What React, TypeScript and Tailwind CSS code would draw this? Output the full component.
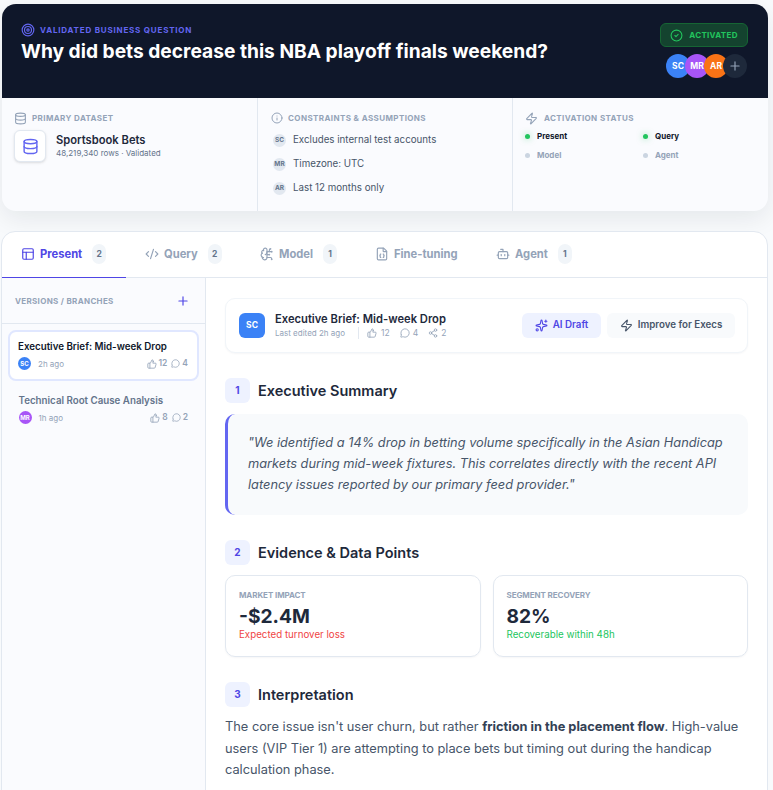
import React from 'react';
import {
  Target, CircleCheck, Plus, Database, Info, Zap, PanelsTopLeft, CodeXml, BrainCircuit, FileJson, Bot,
  ThumbsUp, MessageCircle, Share2, Sparkles,
} from 'lucide-react';

const font = { fontFamily: 'Inter, sans-serif' };

const tabs = [
  { label: 'Present', count: 2, Icon: PanelsTopLeft, active: true, w: 'w-[124px]' },
  { label: 'Query', count: 2, Icon: CodeXml, w: 'w-[115px]' },
  { label: 'Model', count: 1, Icon: BrainCircuit, w: 'w-[115px]' },
  { label: 'Fine-tuning', Icon: FileJson, w: 'w-[121px]' },
  { label: 'Agent', count: 1, Icon: Bot, w: 'w-[110px]' },
];

const Constraint = ({ who, text }: { who: string; text: string }) => (
  <div className="flex items-center gap-[7px] h-[16px]">
    <span className="w-[13px] h-[13px] rounded-full bg-[#e2e8f0] text-[#64748b] text-[6.5px] font-bold flex items-center justify-center">{who}</span>
    <span className="text-[9.75px] text-[#475569]">{text}</span>
  </div>
);

const Status = ({ label, on }: { label: string; on?: boolean }) => (
  <div className="flex items-center gap-[7px] h-[12px]">
    <span className={on ? 'w-[5px] h-[5px] rounded-full bg-[#22c55e] shadow-[0_0_6px_rgba(34,197,94,0.5)]' : 'w-[5px] h-[5px] rounded-full bg-[#cbd5e1]'} />
    <span className={on ? 'text-[8px] font-bold text-[#0f172a]' : 'text-[8px] font-bold text-[#94a3b8]'}>{label}</span>
  </div>
);

const SectionHead = ({ n, title }: { n: number; title: string }) => (
  <div className="flex items-center gap-[8px]">
    <span className="w-[25px] h-[25px] rounded-[6px] bg-[#eef2ff] text-[#4f46e5] text-[10px] font-bold flex items-center justify-center">{n}</span>
    <h2 className="text-[14.5px] font-semibold text-[#1e293b]">{title}</h2>
  </div>
);

const App: React.FC = () => {
  return (
    <div style={font} className="h-[790px] overflow-hidden bg-[#f8fafc] pl-[2px] pt-[4px] pr-[5px]">
      {/* Question card */}
      <div className="rounded-[14px] overflow-hidden bg-[#fafbfe] shadow-[0_8px_24px_rgba(15,23,42,0.08)]">
        <div className="h-[94px] bg-[#0f172a] pl-[19px] pr-[20px] flex justify-between">
          <div className="pt-[18px]">
            <div className="flex items-center gap-[5px] h-[16px]">
              <Target size={14} className="text-[#6366f1]" />
              <span className="text-[8px] font-bold tracking-[0.1em] text-[#6366f1]">VALIDATED BUSINESS QUESTION</span>
            </div>
            <h1 className="text-[19.2px] leading-[26px] font-bold text-white">Why did bets decrease this NBA playoff finals weekend?</h1>
          </div>
          <div className="pt-[19px] flex flex-col items-end">
            <div className="h-[24px] w-[88px] rounded-[6px] border border-[#166534] bg-[#14432f] flex items-center justify-center gap-[6px]">
              <CircleCheck size={13} className="text-[#22c55e]" />
              <span className="text-[8px] font-bold tracking-[0.04em] text-[#22c55e]">ACTIVATED</span>
            </div>
            <div className="flex mt-[7px] mr-[1px]">
              <span className="w-[24px] h-[24px] rounded-full bg-[#3b82f6] text-white text-[8.5px] font-bold flex items-center justify-center">SC</span>
              <span className="w-[24px] h-[24px] -ml-[5px] rounded-full bg-[#a855f7] text-white text-[8.5px] font-bold flex items-center justify-center">MR</span>
              <span className="w-[24px] h-[24px] -ml-[5px] rounded-full bg-[#f97316] text-white text-[8.5px] font-bold flex items-center justify-center">AR</span>
              <span className="w-[24px] h-[24px] -ml-[5px] rounded-full bg-[#1e293b] text-[#94a3b8] flex items-center justify-center"><Plus size={14} /></span>
            </div>
          </div>
        </div>
        <div className="h-[113px] grid grid-cols-[256px_255px_1fr]">
          <div className="border-r border-[#e2e8f0] pl-[12px] pt-[14px]">
            <div className="flex items-center gap-[5px] h-[12px]">
              <Database size={13} className="text-[#94a3b8]" />
              <span className="text-[8px] font-bold tracking-[0.05em] text-[#94a3b8]">PRIMARY DATASET</span>
            </div>
            <div className="flex items-center gap-[10px] mt-[6px]">
              <div className="w-[32px] h-[32px] rounded-[6px] bg-white border border-[#e2e8f0] shadow-sm flex items-center justify-center">
                <Database size={17} className="text-[#6366f1]" />
              </div>
              <div>
                <div className="text-[11.2px] leading-[14px] font-semibold text-[#1e293b]">Sportsbook Bets</div>
                <div className="text-[8px] leading-[13px] text-[#64748b]">48,219,340 rows · Validated</div>
              </div>
            </div>
          </div>
          <div className="border-r border-[#e2e8f0] pl-[13px] pt-[14px]">
            <div className="flex items-center gap-[5px] h-[12px]">
              <Info size={12} className="text-[#94a3b8]" />
              <span className="text-[8px] font-bold tracking-[0.05em] text-[#94a3b8]">CONSTRAINTS &amp; ASSUMPTIONS</span>
            </div>
            <div className="flex flex-col gap-[8px] mt-[8.5px] pl-[2px]">
              <Constraint who="SC" text="Excludes internal test accounts" />
              <Constraint who="MR" text="Timezone: UTC" />
              <Constraint who="AR" text="Last 12 months only" />
            </div>
          </div>
          <div className="pl-[12px] pt-[14px]">
            <div className="flex items-center gap-[6px] h-[12px]">
              <Zap size={13} className="text-[#94a3b8]" />
              <span className="text-[8px] font-bold tracking-[0.05em] text-[#94a3b8]">ACTIVATION STATUS</span>
            </div>
            <div className="grid grid-cols-[118px_1fr] gap-y-[7px] mt-[6px]">
              <Status label="Present" on />
              <Status label="Query" on />
              <Status label="Model" />
              <Status label="Agent" />
            </div>
          </div>
        </div>
      </div>

      {/* Detail card */}
      <div className="relative mt-[20px] -ml-px h-[600px] rounded-t-[14px] border border-[#e2e8f0] bg-white flex flex-col">
        <div className="h-[46px] pb-px flex border-b border-[#e2e8f0] shrink-0">
          {tabs.map(({ label, count, Icon, active, w }) => (
            <div key={label} className={`${w} relative flex items-center pl-[19px] gap-[5px]`}>
              <Icon size={14} className={active ? 'text-[#4f46e5]' : 'text-[#94a3b8]'} />
              <span className={active ? 'text-[11.2px] font-bold text-[#4f46e5]' : 'text-[11.2px] font-bold text-[#94a3b8]'}>{label}</span>
              {count !== undefined && (
                <span className="ml-[5px] h-[20px] w-[14px] rounded-full bg-[#f1f5f9] text-[#64748b] text-[8.5px] font-bold flex items-center justify-center">{count}</span>
              )}
              {active && <span className="absolute left-0 right-0 -bottom-[2px] h-px bg-[#4f46e5]" />}
            </div>
          ))}
        </div>
        <div className="flex flex-1 min-h-0">
          {/* Sidebar */}
          <div className="w-[204px] shrink-0 border-r border-[#e2e8f0] bg-[#fafbfe]">
            <div className="h-[46px] border-b border-[#e2e8f0] flex items-center justify-between pl-[13px] pr-[15px]">
              <span className="text-[8px] font-bold tracking-[0.04em] text-[#94a3b8]">VERSIONS / BRANCHES</span>
              <Plus size={14} className="text-[#4f46e5]" />
            </div>
            <div className="px-[6px] pt-[6px]">
              <div className="h-[51px] rounded-[8px] border-2 border-[#e0e7ff] bg-white pl-[8px] pr-[9px] pt-[8px]">
                <div className="text-[9.75px] leading-[14px] font-semibold text-[#0f172a]">Executive Brief: Mid-week Drop</div>
                <div className="flex items-center mt-[3px] text-[8px] text-[#94a3b8]">
                  <span className="w-[13px] h-[13px] rounded-full bg-[#3b82f6] text-white text-[6px] font-bold flex items-center justify-center">SC</span>
                  <span className="ml-[7px]">2h ago</span>
                  <ThumbsUp size={10} className="ml-auto" />
                  <span className="ml-[1px] font-semibold text-[8.5px]">12</span>
                  <MessageCircle size={9} className="ml-[4px]" />
                  <span className="ml-[2px] font-semibold text-[8.5px]">4</span>
                </div>
              </div>
              <div className="h-[51px] mt-[5px] pl-[10.5px] pr-[11px] pt-[8px]">
                <div className="text-[9.75px] leading-[14px] font-semibold text-[#64748b]">Technical Root Cause Analysis</div>
                <div className="flex items-center mt-[3px] text-[8px] text-[#94a3b8]">
                  <span className="w-[13px] h-[13px] rounded-full bg-[#a855f7] text-white text-[6px] font-bold flex items-center justify-center">MR</span>
                  <span className="ml-[7px]">1h ago</span>
                  <ThumbsUp size={10} className="ml-auto" />
                  <span className="ml-[2px] font-semibold text-[8.5px]">8</span>
                  <MessageCircle size={9} className="ml-[4px]" />
                  <span className="ml-[2px] font-semibold text-[8.5px]">2</span>
                </div>
              </div>
            </div>
          </div>

          {/* Main */}
          <div className="flex-1 min-w-0 pl-[19px] pr-[19px] pt-[20px]">
            <div className="h-[55px] rounded-[10px] border border-[#f1f5f9] shadow-[0_1px_2px_rgba(15,23,42,0.04)] bg-white flex items-center pl-[13px] pr-[12px]">
              <span className="w-[26px] h-[25px] rounded-[6px] bg-[#3b82f6] text-white text-[8.5px] font-bold flex items-center justify-center">SC</span>
              <div className="ml-[10px]">
                <div className="text-[11.2px] leading-[15px] font-semibold text-[#1e293b]">Executive Brief: Mid-week Drop</div>
                <div className="flex items-center text-[8px] leading-[12px] text-[#94a3b8]">
                  <span>Last edited 2h ago</span>
                  <span className="w-px h-[12px] bg-[#e2e8f0] ml-[13px] mr-[8px]" />
                  <ThumbsUp size={10} />
                  <span className="ml-[4px] text-[8.5px]">12</span>
                  <MessageCircle size={10} className="ml-[10px]" />
                  <span className="ml-[3px] text-[8.5px]">4</span>
                  <Share2 size={10} className="ml-[10px]" />
                  <span className="ml-[3px] text-[8.5px]">2</span>
                </div>
              </div>
              <div className="ml-auto flex gap-[6px]">
                <div className="h-[25px] w-[79px] rounded-[6px] bg-[#eef2ff] flex items-center justify-center gap-[5px] text-[#4f46e5]">
                  <Sparkles size={13} />
                  <span className="text-[9.75px] font-semibold">AI Draft</span>
                </div>
                <div className="h-[25px] w-[128px] rounded-[6px] bg-[#f8fafc] flex items-center justify-center gap-[5px] text-[#475569]">
                  <Zap size={13} />
                  <span className="text-[9.75px] font-semibold">Improve for Execs</span>
                </div>
              </div>
            </div>

            <div className="mt-[25px]">
              <SectionHead n={1} title="Executive Summary" />
              <div className="mt-[11px] h-[101px] rounded-[10px] border-l-[3px] border-[#6366f1] bg-[#f8fafc] pl-[20px] pr-[20px] pt-[18px]">
                <p className="text-[12.8px] leading-[21px] italic text-[#475569]">"We identified a 14% drop in betting volume specifically in the Asian Handicap markets during mid-week fixtures. This correlates directly with the recent API latency issues reported by our primary feed provider."</p>
              </div>
            </div>

            <div className="mt-[25px]">
              <SectionHead n={2} title="Evidence & Data Points" />
              <div className="grid grid-cols-2 gap-[12px] mt-[10px]">
                <div className="h-[82px] rounded-[10px] border border-[#e2e8f0] shadow-[0_1px_2px_rgba(15,23,42,0.04)] px-[13px] pt-[13px]">
                  <div className="text-[8px] leading-[12px] font-bold tracking-[-0.01em] text-[#94a3b8]">MARKET IMPACT</div>
                  <div className="mt-[2px] text-[19.2px] leading-[26px] font-bold text-[#1e293b]">-$2.4M</div>
                  <div className="text-[9.75px] leading-[12px] text-[#ef4444]">Expected turnover loss</div>
                </div>
                <div className="h-[82px] rounded-[10px] border border-[#e2e8f0] shadow-[0_1px_2px_rgba(15,23,42,0.04)] px-[13px] pt-[13px]">
                  <div className="text-[8px] leading-[12px] font-bold tracking-[-0.01em] text-[#94a3b8]">SEGMENT RECOVERY</div>
                  <div className="mt-[2px] text-[19.2px] leading-[26px] font-bold text-[#1e293b]">82%</div>
                  <div className="text-[9.75px] leading-[12px] text-[#22c55e]">Recoverable within 48h</div>
                </div>
              </div>
            </div>

            <div className="mt-[25px]">
              <SectionHead n={3} title="Interpretation" />
              <p className="mt-[9px] text-[12.8px] leading-[21.6px] text-[#475569]">The core issue isn't user churn, but rather <strong className="font-bold text-[#334155]">friction in the placement flow</strong>. High-value users (VIP Tier 1) are attempting to place bets but timing out during the handicap calculation phase.</p>
            </div>
          </div>
        </div>
      </div>
    </div>
  );
};

export default App;
